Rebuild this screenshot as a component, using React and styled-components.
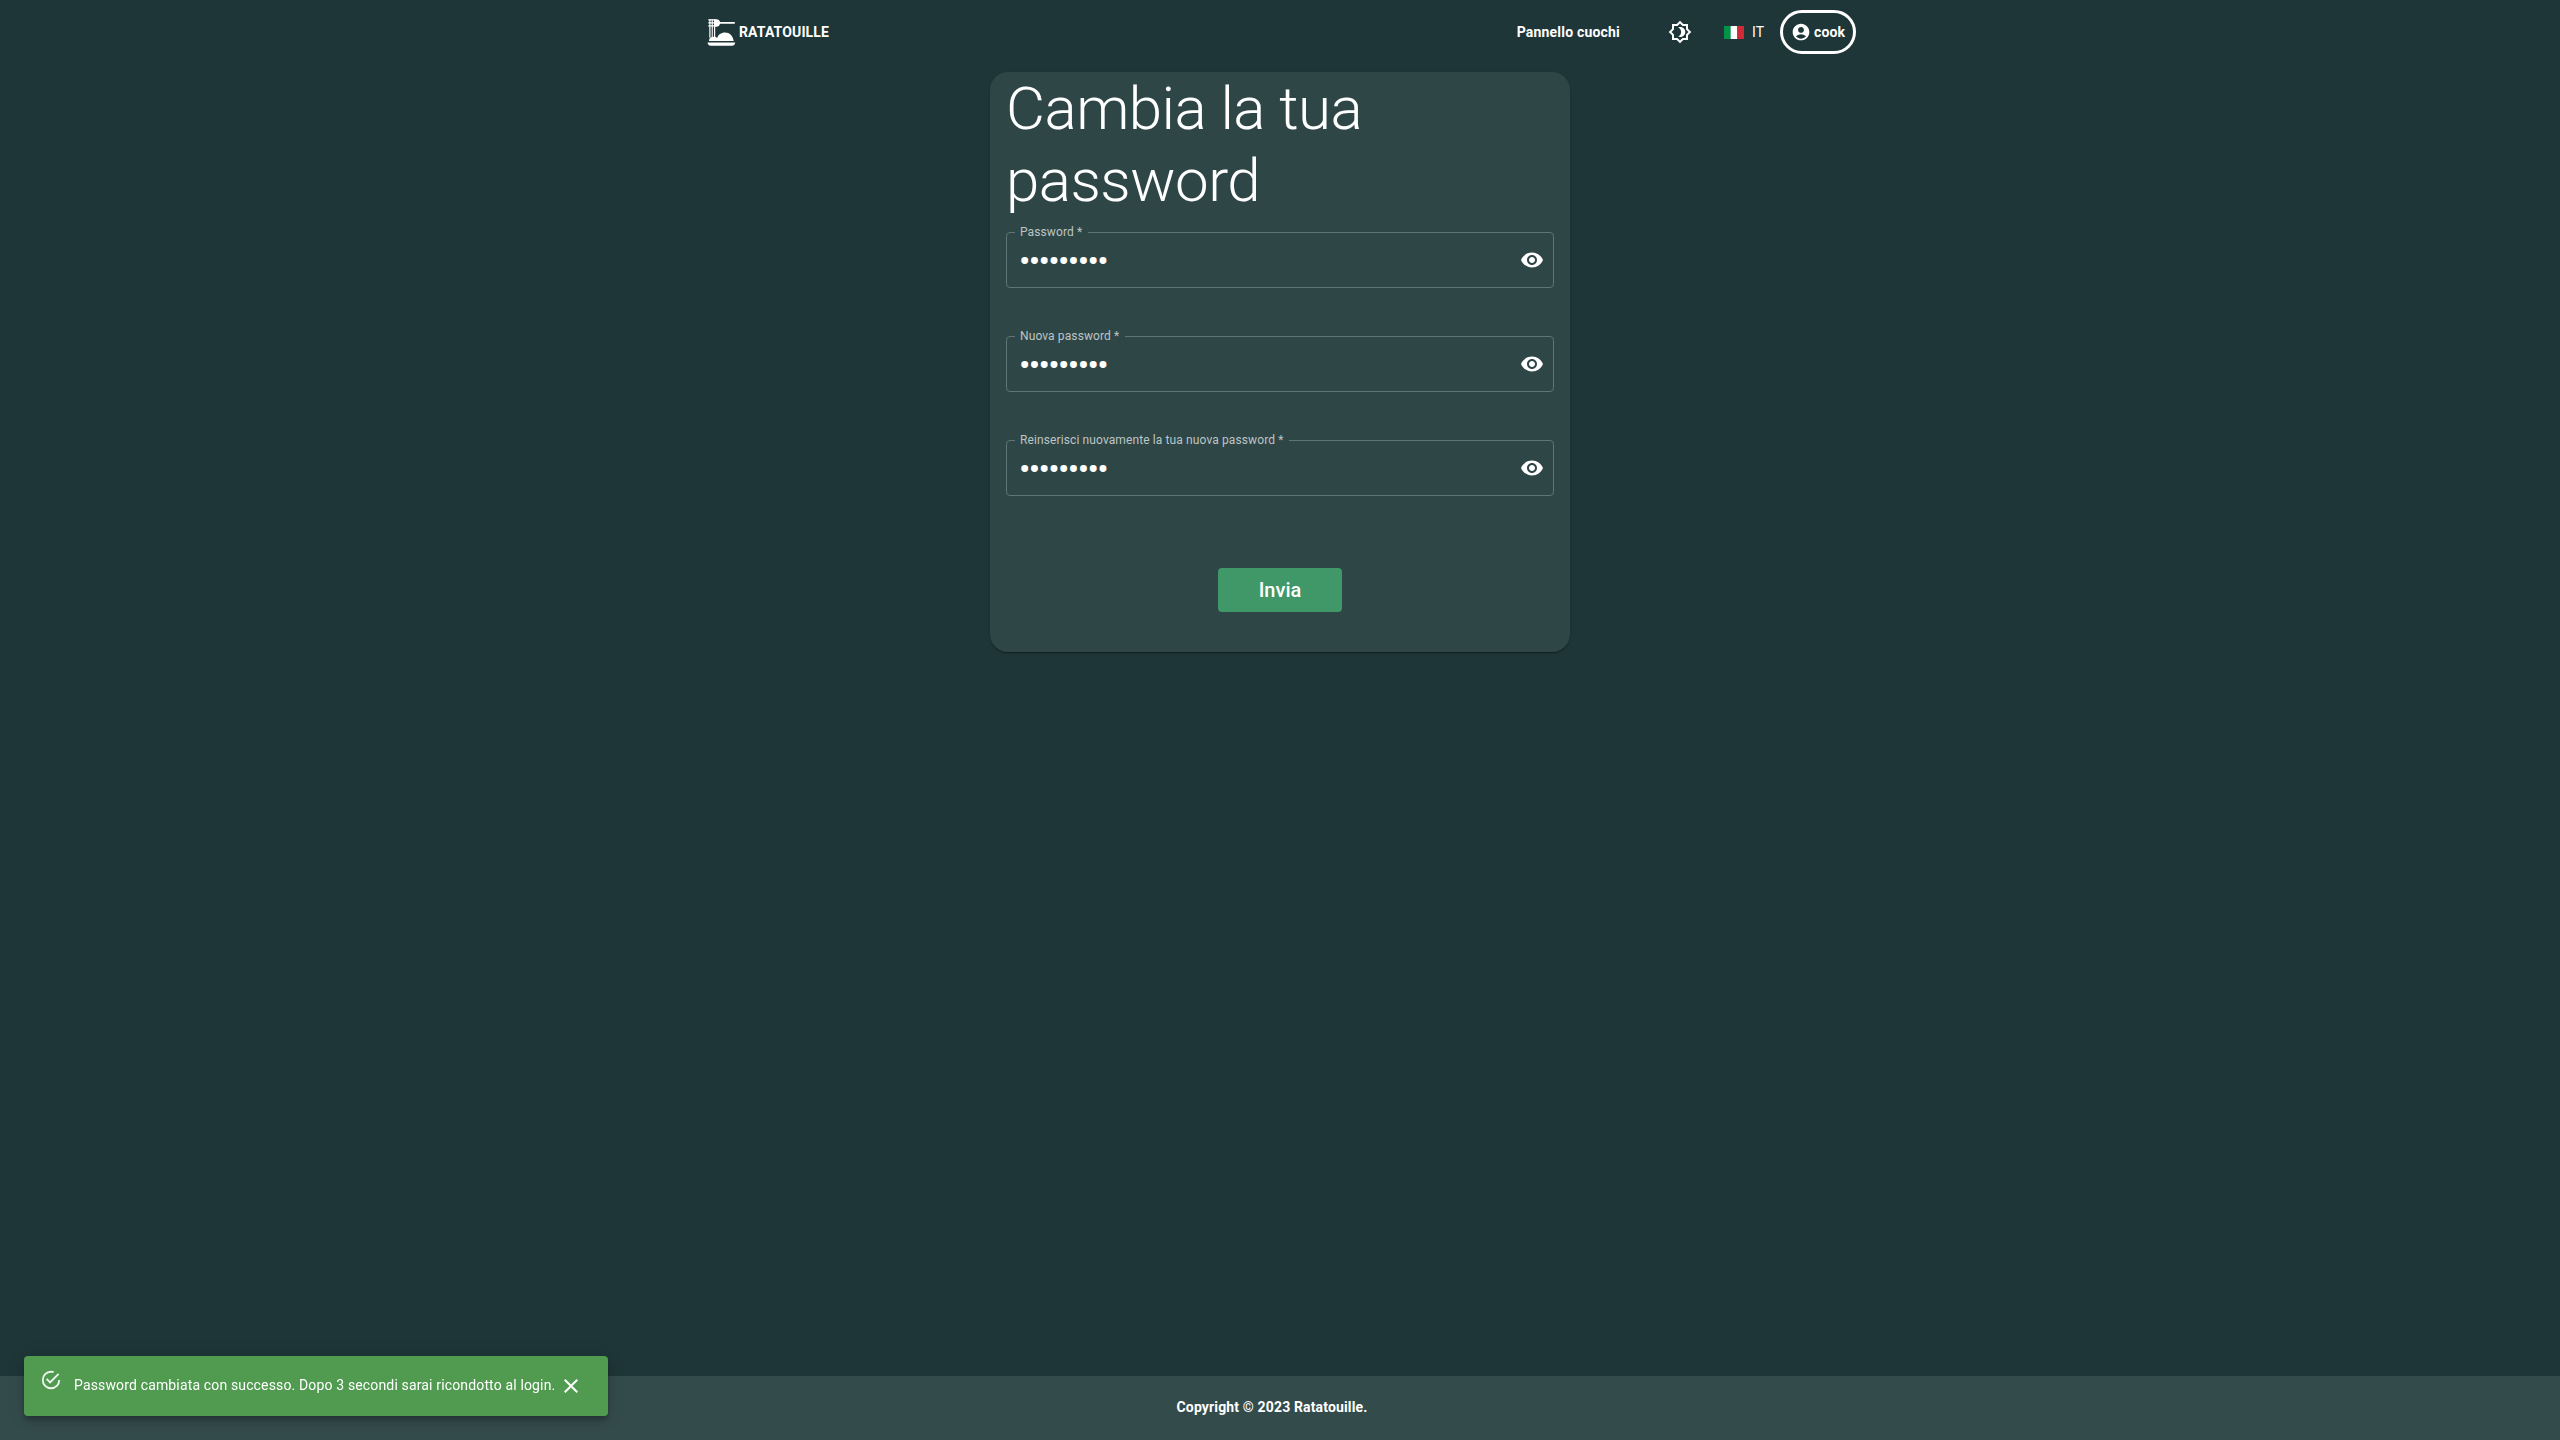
import React from "react";
import styled, { createGlobalStyle } from "styled-components";
import { MdVisibility, MdAccountCircle, MdOutlineBrightness4, MdClose } from "react-icons/md";

const Global = createGlobalStyle`
  * { box-sizing: border-box; }
  body { margin: 0; background: #1e3638; color: #fff; font-family: Roboto, "Liberation Sans", sans-serif; }
`;
const Page = styled.div`
  min-height: 100vh; display: flex; flex-direction: column;
`;
const Header = styled.header`
  width: 1200px; height: 64px; margin: 0 auto; padding: 0 24px;
  display: flex; align-items: center; justify-content: space-between;
`;
const Brand = styled.div`
  display: flex; align-items: center; padding-left: 2px; font-size: 14px; font-weight: 700; line-height: 24px; letter-spacing: 0.14px;
  svg { display: block; margin-right: 3px; }
`;
const Nav = styled.nav`
  display: flex; align-items: center; font-size: 14px; line-height: 24px;
`;
const NavLink = styled.span`
  font-weight: 700; margin-right: 48px; letter-spacing: 0.2px;
`;
const ThemeToggle = styled.span`
  display: flex; font-size: 24px; margin-right: 32px;
`;
const Language = styled.span`
  display: flex; align-items: center; gap: 8px; margin-right: 16px;
`;
const UserPill = styled.span`
  display: flex; align-items: center; justify-content: center; gap: 3px;
  width: 76px; height: 44px; border: 3px solid #fff; border-radius: 22px; font-weight: 700; letter-spacing: 0.1px;
  svg { font-size: 20px; }
`;
const Main = styled.main`
  flex: 1; display: flex; justify-content: center; align-items: flex-start; padding-top: 8px;
`;
const Card = styled.form`
  width: 580px; height: 580px; padding: 1px 16px 0; border-radius: 18px; background: #2f4647;
  display: flex; flex-direction: column; align-items: stretch;
  box-shadow: 0 2px 1px -1px rgba(0,0,0,.2), 0 1px 1px 0 rgba(0,0,0,.14), 0 1px 3px 0 rgba(0,0,0,.12);
`;
const Title = styled.h1`
  margin: 0 0 10px; font-size: 60px; font-weight: 300; line-height: 72px; letter-spacing: -0.5px;
`;
const Field = styled.fieldset`
  margin: 0 0 43px; padding: 0 9px 0 8px; height: 61px; min-width: 0;
  border: 1px solid #5f7672; border-radius: 4px;
`;
const Legend = styled.legend`
  padding: 0 6px 0 5px; height: 11px; font-size: 12px; line-height: 11px; letter-spacing: 0.112px; color: #bcc5c3;
`;
const FieldRow = styled.div`
  height: 49px; display: flex; align-items: center; justify-content: space-between; padding: 0 0 6px 4px;
  svg { font-size: 24px; }
`;
const Dots = styled.input`
  width: 300px; height: 39px; padding: 3px 0 0; border: 0; outline: 0; background: transparent; color: #fff;
  font: 400 34px/36px Roboto, "Liberation Sans", sans-serif; letter-spacing: -1.7px;
`;
const Submit = styled.button`
  align-self: center; margin-top: 29px; width: 124px; height: 44px; border: 0; border-radius: 4px; padding: 0;
  background: #409868; color: #fff; font: 500 20px/24px Roboto, "Liberation Sans", sans-serif;
`;
const Footer = styled.footer`
  height: 64px; padding: 0 16px 2px 0; background: #344b4c; display: flex; align-items: center; justify-content: center;
  font-size: 14px; font-weight: 700; letter-spacing: 0.15px;
`;
const Toast = styled.div`
  position: fixed; left: 24px; bottom: 24px; width: 584px; height: 60px; padding: 14px 16px;
  display: flex; align-items: flex-start; border-radius: 4px; background: #509b50; font-size: 14px; line-height: 20px;
  box-shadow: 0 3px 5px -1px rgba(0,0,0,.2), 0 6px 10px 0 rgba(0,0,0,.14), 0 1px 18px 0 rgba(0,0,0,.12);
`;
const ToastIcon = styled.svg`
  width: 22px; height: 22px; margin-right: 12px; margin-top: -1px; opacity: .9; flex: none;
`;
const ToastText = styled.span`
  margin: 5px 4px 0 0; white-space: nowrap; letter-spacing: 0.15px;
`;
const ToastClose = styled.span`
  display: flex; font-size: 24px; margin-top: 4px;
`;

const Logo = () => (
  <svg width="30" height="30" viewBox="0 0 30 30" fill="#fff">
    <path d="M9 2.200h1.800a3.700 3.700 0 0 1 3.300 2.900H28.800v1.700H14.100a3.700 3.700 0 0 1-3.300 2.900H9z" />
    <path d="M2.300 2.300h7v1.200h-7zM2.300 5.300h7v1.200h-7zM2.300 8.300h7v1.200h-7z" />
    <path d="M3.300 2.300h1.200v18.500H3.300zM5.700 2.300h1.100v18.500H5.700zM8 2.300h1.200v18.500H8z" />
    <path d="M3 24c0-2.600 1.500-4 3.500-4 1.800-.6 3.700-.1 4.700 1 .8-3.400 4-5.600 7.800-5.600 4.500 0 8 3.400 8.700 8.600z" />
    <path d="M1.600 25.500h27.600c0 2-1.300 3.200-3.200 3.200H4.800c-1.900 0-3.200-1.200-3.200-3.200z" />
  </svg>
);
const Flag = () => (
  <svg width="20" height="13" viewBox="0 0 20 13">
    <path fill="#009246" d="M0 0h7v13H0z" /><path fill="#fff" d="M6.670 0h6.660v13H6.670z" /><path fill="#ce2b37" d="M13.330 0H20v13h-6.670z" />
  </svg>
);
const labels = ["Password *", "Nuova password *", "Reinserisci nuovamente la tua nuova password *"];

export default function App() {
  return (
    <Page>
      <Global />
      <Header>
        <Brand><Logo />RATATOUILLE</Brand>
        <Nav>
          <NavLink>Pannello cuochi</NavLink>
          <ThemeToggle><MdOutlineBrightness4 /></ThemeToggle>
          <Language><Flag />IT</Language>
          <UserPill><MdAccountCircle />cook</UserPill>
        </Nav>
      </Header>
      <Main>
        <Card>
          <Title>Cambia la tua password</Title>
          {labels.map((label) => (
            <Field key={label}>
              <Legend>{label}</Legend>
              <FieldRow><Dots type="password" defaultValue="ratatouil" /><MdVisibility /></FieldRow>
            </Field>
          ))}
          <Submit type="button">Invia</Submit>
        </Card>
      </Main>
      <Footer>Copyright © 2023 Ratatouille.</Footer>
      <Toast>
        <ToastIcon viewBox="0 0 24 24" fill="#fff">
          <path d="M20,12A8,8 0 0,1 12,20A8,8 0 0,1 4,12A8,8 0 0,1 12,4C12.76,4 13.5,4.11 14.2,4.31L15.77,2.74C14.61,2.26 13.34,2 12,2A10,10 0 0,0 2,12A10,10 0 0,0 12,22A10,10 0 0,0 22,12M7.91,10.08L6.5,11.5L11,16L21,6L19.59,4.58L11,13.17L7.91,10.08Z" />
        </ToastIcon>
        <ToastText>Password cambiata con successo. Dopo 3 secondi sarai ricondotto al login.</ToastText>
        <ToastClose><MdClose /></ToastClose>
      </Toast>
    </Page>
  );
}
